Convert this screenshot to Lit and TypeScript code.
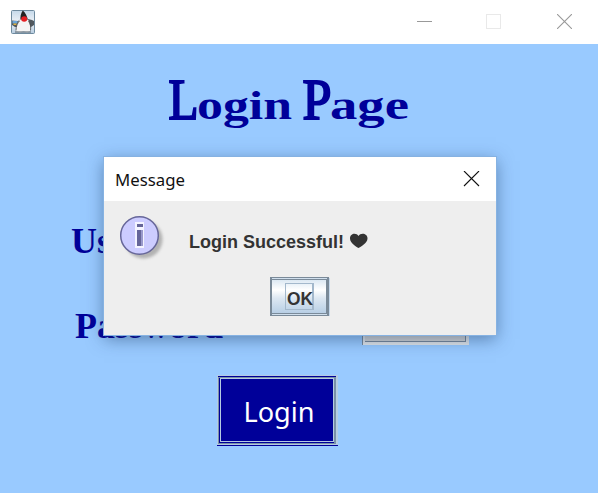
import { LitElement, html, css } from "lit";
import { customElement } from "lit/decorators.js";

@customElement("app-root")
export class AppRoot extends LitElement {
  static styles = css`
    :host { display: block; width: 598px; height: 493px; }
    * { box-sizing: border-box; }
    svg { display: block; }
    .window { position: relative; width: 598px; height: 493px; overflow: hidden; background: #99caff; display: flex; flex-direction: column; }
    .bar { height: 44px; flex: none; background: #fff; display: flex; align-items: center; padding: 0 26px 1px 10px; }
    .controls { margin-left: auto; display: flex; align-items: center; gap: 54px; }
    .close { margin-left: 2px; }
    .title { height: 96px; flex: none; overflow: visible; }
    .form { display: grid; grid-template-columns: 262px 107px; grid-template-rows: 85px 85px; column-gap: 82px; padding: 0 0 0 18px; margin-top: 58px; height: 156px; flex: none; }
    .label { font: bold 36px/41px "Liberation Serif", serif; color: #009; text-align: center; padding-top: 23px; }
    .field { margin-top: 24px; width: 107px; height: 38px; align-self: start; background: #e2e5e8; border-left: 1px solid #778899; padding: 0 3px 3px 2px; }
    .field-in { height: 35px; background: #d4d4d4; border: 1px solid #778899; border-width: 0 1px 1px 0; }
    .login { margin: 21px 0 0 217px; width: 121px; height: 71px; flex: none; }
    .dialog { position: absolute; left: 104px; top: 157px; width: 392px; height: 178px; background: #eee; display: flex; flex-direction: column; box-shadow: 0 0 0 1px #86b2e2, 0 4px 16px rgba(25, 55, 95, .5); }
    .dhead { height: 44px; flex: none; background: #fff; display: flex; align-items: center; justify-content: space-between; padding: 0 16px 0 11px; }
    .dtitle { height: 44px; }
    .dbody { display: flex; padding: 13px 0 0 14px; height: 76px; }
    .msg { height: 50px; margin-left: 21px; }
    .ok { margin-left: 165px; }
  `;

  render() {
    return html`
      <div class="window">
        <div class="bar">
          <svg width="26" height="26" viewBox="0 0 26 26">
            <defs><linearGradient id="jb" x1="0" y1="0" x2="0" y2="1"><stop offset="0" stop-color="#c5d9ea"/><stop offset=".5" stop-color="#eef2f7"/><stop offset="1" stop-color="#b5cbdf"/></linearGradient></defs>
            <rect x="1.500" y="1.500" width="23" height="23" rx="1" fill="url(#jb)" stroke="#6e8a9e"/>
            <path d="M2 11.500l6 .5 3-2h7l4 1 2 1v4l-3 2-3-3-9-1-1 4H5l-3-2z" fill="#50585e"/>
            <path d="M2.500 12h5v2.500h-5z" fill="#68a4d8"/><path d="M3.500 14.500h3V16h-3z" fill="#e0b23c"/>
            <path d="M12.800 1.500c2.500 2 4.500 6 5.200 10l-7.500.5c-.5-4 .3-8 2.300-10.500z" fill="#222"/>
            <path d="M10 10.500h8c2 3.500 3 8 2 11.500l-3 1.500-3.500-1.500-3.500 1.500-4-1.500c0-4 1-8 4-11.500z" fill="#f4f4f4"/>
            <path d="M9.500 12c-2 2-3.500 5-3.500 9.500M18.500 12c2 3 2.500 6 2 9.500" stroke="#444" stroke-width=".8" fill="none"/>
            <path d="M5 23h16" stroke="#555e66" stroke-width="1"/>
            <ellipse cx="14.200" cy="10" rx="3" ry="2.800" fill="#e51f24"/>
          </svg>
          <div class="controls">
            <svg width="15" height="15"><path d="M0 7.500h15" stroke="#999"/></svg>
            <svg width="15" height="15"><rect x=".5" y=".5" width="14" height="14" fill="none" stroke="#e9e9e9"/></svg>
            <svg class="close" width="15" height="15"><path d="M0 0l15 15M15 0L0 15" stroke="#999" stroke-width="1.100"/></svg>
          </div>
        </div>
        <svg class="title" width="598" height="96" font-family="Liberation Serif, serif" font-weight="bold" fill="#009">
          <text y="74.500"><tspan x="168.500" font-size="56" font-weight="normal" stroke="#009" stroke-width="2" textLength="30" lengthAdjust="spacingAndGlyphs">L</tspan><tspan x="197" font-size="41" textLength="95" lengthAdjust="spacingAndGlyphs">ogin</tspan> <tspan x="302.500" font-size="56" font-weight="normal" stroke="#009" stroke-width="2" textLength="29" lengthAdjust="spacingAndGlyphs">P</tspan><tspan x="330" font-size="41" textLength="79" lengthAdjust="spacingAndGlyphs">age</tspan></text>
        </svg>
        <div class="form">
          <div class="label">Username</div><div class="field"><div class="field-in"></div></div>
          <div class="label">Password</div><div class="field"><div class="field-in"></div></div>
        </div>
        <svg class="login" width="121" height="71" viewBox="217 375 121 71" shape-rendering="crispEdges">
          <rect x="217" y="375" width="121" height="70" fill="#b4cbe2"/>
          <path d="M218 376h118v1H218z" fill="#009"/>
          <rect x="218" y="377" width="118" height="67" fill="#7890a8"/>
          <rect x="219" y="378" width="115" height="65" fill="#009"/>
          <rect x="220.500" y="378.500" width="113" height="63" fill="#009" stroke="#b4cbe2"/>
          <rect x="217" y="445" width="121" height="1" fill="#009"/>
          <text x="243.500" y="422" font-family="Noto Sans, sans-serif" font-size="27" fill="#fff" textLength="71" lengthAdjust="spacingAndGlyphs">Login</text>
        </svg>
        <div class="dialog">
          <div class="dhead">
            <svg class="dtitle" width="90" height="44"><text x="0" y="29" font-family="Noto Sans, sans-serif" font-size="17" fill="#111" textLength="70" lengthAdjust="spacingAndGlyphs">Message</text></svg>
            <svg width="17" height="16"><path d="M1 0l15 15M16 0L1 15" stroke="#111" stroke-width="1.100"/></svg>
          </div>
          <div class="dbody">
            <svg width="50" height="50" viewBox="118 214 50 50">
              <defs><filter id="bl"><feGaussianBlur stdDeviation="1.800"/></filter></defs>
              <circle cx="143.500" cy="239.500" r="19" fill="#999" opacity=".7" filter="url(#bl)"/>
              <circle cx="139.500" cy="235.500" r="18.800" fill="#ccf" stroke="#669" stroke-width="1.500"/>
              <path d="M135 222h9v26h-9z" fill="#f4f4ff"/>
              <path d="M137 224h6v3h-6zM137 230h4v16h-4z" fill="#669"/><path d="M141 230h2v16h-2z" fill="#99c"/>
            </svg>
            <svg class="msg" width="185" height="50" viewBox="189 214 185 50">
              <text x="189" y="248" font-family="Liberation Sans, sans-serif" font-weight="bold" font-size="18" fill="#333" textLength="155" lengthAdjust="spacingAndGlyphs">Login Successful!</text>
              <path d="M358.500 248c-2-1-8.500-5-8.500-9.500 0-5.500 6.500-6 8.500-2.500 2-3.500 9-3 9 2.500 0 4.500-7 8.500-9 9.500z" fill="#333"/>
            </svg>
          </div>
          <svg class="ok" width="61" height="40" viewBox="269 277 61 40">
            <defs><linearGradient id="okg" x1="0" y1="0" x2="0" y2="1"><stop offset="0" stop-color="#dce8f3"/><stop offset=".3" stop-color="#fff"/><stop offset=".55" stop-color="#dce7f2"/><stop offset="1" stop-color="#b8cfe5"/></linearGradient></defs>
            <g shape-rendering="crispEdges">
              <rect x="329" y="278" width="1" height="38" fill="#c5d8eb"/>
              <rect x="270" y="277" width="59" height="39" fill="#7a8a99"/>
              <path d="M272 278h55v1h-55zM272 314h55v1h-55z" fill="#d0dfed"/>
              <rect x="272" y="280" width="54" height="33" fill="url(#okg)"/>
              <path d="M285 283h29v27h-29zm1 1v25h26v-25z" fill="#a3b8cc" fill-rule="evenodd"/>
            </g>
            <text x="287" y="305" font-family="Liberation Sans, sans-serif" font-weight="bold" font-size="18" fill="#333" textLength="26" lengthAdjust="spacingAndGlyphs">OK</text>
          </svg>
        </div>
      </div>`;
  }
}
